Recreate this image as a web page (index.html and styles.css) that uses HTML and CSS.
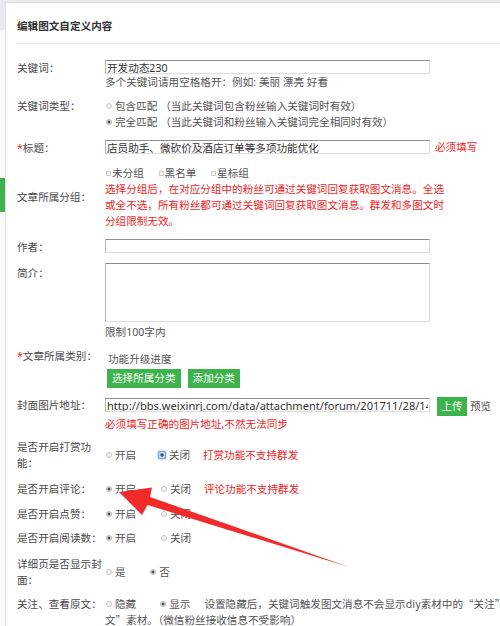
FILE: index.html
```html
<!DOCTYPE html>
<html lang="zh-CN">
<head>
<meta charset="utf-8">
<title>编辑图文自定义内容</title>
<link rel="stylesheet" href="styles.css">
</head>
<body>
<div class="layout">
  <aside class="sidenav">
    <span class="sidenav-item"></span>
    <span class="sidenav-active"></span>
  </aside>
  <main class="panel">
    <h2 class="panel-title">编辑图文自定义内容</h2>
    <form class="form">
      <div class="row mt-16">
        <label class="label">关键词：</label>
        <div class="field">
          <input type="text" class="text-input" value="开发动态230">
          <p class="hint">多个关键词请用空格格开：例如: 美丽 漂亮 好看</p>
        </div>
      </div>

      <div class="row mt-8">
        <span class="label">关键词类型：</span>
        <div class="field">
          <label class="choice-line"><input type="radio" class="radio" name="match">包含匹配&nbsp;（当此关键词包含粉丝输入关键词时有效）</label>
          <label class="choice-line"><input type="radio" class="radio" name="match" checked>完全匹配&nbsp;（当此关键词和粉丝输入关键词完全相同时有效）</label>
        </div>
      </div>

      <div class="row mt-10">
        <label class="label"><em class="req">*</em>标题：</label>
        <div class="field field-inline">
          <input type="text" class="text-input" value="店员助手、微砍价及酒店订单等多项功能优化">
          <span class="warn warn-side">必须填写</span>
        </div>
      </div>

      <div class="row mt-9">
        <span class="label label-middle">文章所属分组：</span>
        <div class="field">
          <div class="choices">
            <label class="choice choice-check"><input type="checkbox" class="checkbox">未分组</label>
            <label class="choice choice-check"><input type="checkbox" class="checkbox">黑名单</label>
            <label class="choice choice-check"><input type="checkbox" class="checkbox">星标组</label>
          </div>
          <p class="warn note-block">选择分组后，在对应分组中的粉丝可通过关键词回复获取图文消息。全选或全不选，所有粉丝都可通过关键词回复获取图文消息。群发和多图文时分组限制无效。</p>
        </div>
      </div>

      <div class="row mt-10">
        <label class="label">作者：</label>
        <div class="field">
          <input type="text" class="text-input" value="">
        </div>
      </div>

      <div class="row mt-8">
        <label class="label label-drop">简介：</label>
        <div class="field">
          <textarea class="text-area"></textarea>
          <p class="hint hint-after">限制100字内</p>
        </div>
      </div>

      <div class="row mt-8">
        <span class="label"><em class="req">*</em>文章所属类别：</span>
        <div class="field field-category">
          <p class="category-name">功能升级进度</p>
          <div class="button-group">
            <button type="button" class="btn">选择所属分类</button>
            <button type="button" class="btn">添加分类</button>
          </div>
        </div>
      </div>

      <div class="row mt-9">
        <label class="label">封面图片地址：</label>
        <div class="field">
          <div class="upload-line">
            <input type="text" class="text-input text-input-url" value="http://bbs.weixinrj.com/data/attachment/forum/201711/28/144512abcdef.jpg">
            <button type="button" class="btn btn-upload">上传</button>
            <span class="preview">预览</span>
          </div>
          <p class="warn">必须填写正确的图片地址,不然无法同步</p>
        </div>
      </div>

      <div class="row mt-7">
        <span class="label">是否开启打赏功能：</span>
        <div class="field field-middle">
          <label class="choice"><input type="radio" class="radio" name="reward">开启</label>
          <label class="choice choice-tail"><input type="radio" class="radio radio-focus" name="reward" checked>关闭</label>
          <span class="warn">打赏功能不支持群发</span>
        </div>
      </div>

      <div class="row mt-10">
        <span class="label">是否开启评论：</span>
        <div class="field">
          <label class="choice"><input type="radio" class="radio" name="comment" checked>开启</label>
          <label class="choice choice-tail"><input type="radio" class="radio" name="comment">关闭</label>
          <span class="warn">评论功能不支持群发</span>
        </div>
      </div>

      <div class="row mt-9">
        <span class="label">是否开启点赞：</span>
        <div class="field">
          <label class="choice"><input type="radio" class="radio" name="like" checked>开启</label>
          <label class="choice"><input type="radio" class="radio" name="like">关闭</label>
        </div>
      </div>

      <div class="row mt-8">
        <span class="label">是否开启阅读数：</span>
        <div class="field">
          <label class="choice"><input type="radio" class="radio" name="reads" checked>开启</label>
          <label class="choice"><input type="radio" class="radio" name="reads">关闭</label>
        </div>
      </div>

      <div class="row mt-10">
        <span class="label">详细页是否显示封面：</span>
        <div class="field field-middle">
          <label class="choice"><input type="radio" class="radio" name="cover">是</label>
          <label class="choice"><input type="radio" class="radio" name="cover" checked>否</label>
        </div>
      </div>

      <div class="row mt-8">
        <span class="label">关注、查看原文：</span>
        <div class="field field-flow"><label class="choice choice-wide"><input type="radio" class="radio" name="follow">隐藏</label><label class="choice choice-note"><input type="radio" class="radio" name="follow" checked>显示</label>设置隐藏后，关键词触发图文消息不会显示diy素材中的“关注”“查看原文”素材。（微信粉丝接收信息不受影响）</div>
      </div>
    </form>
  </main>
</div>

<svg class="pointer-arrow" width="500" height="626" viewBox="0 0 500 626" aria-hidden="true">
  <polygon points="119,492 152,487.5 150,497 349,567 147.5,505 142,515" fill="#f12a2a"/>
</svg>
</body>
</html>
```

FILE: styles.css
```css
* {
  box-sizing: border-box;
}

html,
body {
  margin: 0;
  padding: 0;
  overflow: hidden;
}

body {
  position: relative;
  width: 500px;
  height: 626px;
  background: #e9ebee;
  font-family: "Noto Sans", "Noto Sans CJK SC", sans-serif;
  font-size: 10.6px;
  line-height: 16px;
  color: #444;
}

p {
  margin: 0;
}

/* page frame: thin side menu + content panel */
.layout {
  display: flex;
  width: 600px;
  padding-top: 2px;
}

.sidenav {
  flex: none;
  width: 5px;
  display: flex;
  flex-direction: column;
  background: #fafafa;
}

.sidenav-item {
  height: 28px;
  background: #e7e9ec;
}

.sidenav-active {
  margin-top: 148px;
  height: 34px;
  background: #3cb44b;
}

.panel {
  flex: none;
  width: 590px;
  min-height: 700px;
  padding: 0 11px 40px;
  background: #fff;
  border: 1px solid #e2e2e2;
  border-right: 0;
}

.panel-title {
  margin: 0;
  padding: 15px 0 9px;
  font-size: 10.6px;
  line-height: 16px;
  font-weight: bold;
  color: #333;
  border-bottom: 1px solid #e8e8e8;
}

/* form rows */
.row {
  display: flex;
  align-items: flex-start;
}

.mt-7 { margin-top: 7px; }
.mt-8 { margin-top: 8px; }
.mt-9 { margin-top: 9px; }
.mt-10 { margin-top: 10px; }
.mt-16 { margin-top: 16px; }

.label {
  flex: none;
  width: 88px;
  color: #4a4a4a;
}

.label-middle {
  align-self: center;
}

.label-drop {
  margin-top: 2px;
}

.req {
  font-style: normal;
  color: #f22;
}

.field {
  flex: none;
  width: 433px;
}

.field-inline {
  display: flex;
  align-items: flex-start;
}

.field-middle {
  align-self: center;
}

.field-category {
  padding: 3px 0 0 2px;
}

.field-flow {
  width: 444px;
  font-family: "Noto Sans CJK SC", sans-serif;
  color: #555;
}

/* text inputs */
.text-input,
.text-area {
  display: block;
  width: 325px;
  margin: 0;
  padding: 0 1px;
  font-family: inherit;
  font-size: 10.6px;
  color: #333;
  background: #fff;
  border: 1px solid #dcdcdc;
  border-top-color: #8e8e8e;
  border-left-color: #b4b4b4;
  border-radius: 0;
  outline: none;
}

.text-input {
  height: 14px;
  line-height: 12px;
}

.text-area {
  height: 59px;
  resize: none;
}

.hint {
  color: #555;
}

.hint-after {
  margin-top: 2px;
}

.warn {
  color: #f31d1d;
}

.warn-side {
  margin-left: 5px;
  margin-top: -1px;
}

.note-block {
  width: 341px;
}

/* radios and checkboxes */
.choice-line {
  display: flex;
  align-items: center;
  color: #555;
}

.choice {
  display: inline-flex;
  align-items: center;
  margin-right: 21px;
  color: #555;
  vertical-align: top;
}

.choice-tail {
  margin-right: 10px;
}

.choice-wide {
  margin-right: 23px;
}

.choice-note {
  margin-right: 14px;
}

.choice-check {
  margin-right: 11px;
}

.radio {
  appearance: none;
  -webkit-appearance: none;
  flex: none;
  width: 6px;
  height: 6px;
  margin: 0 3px 0 1px;
  border: 1px solid #c6c6c6;
  border-radius: 50%;
  background: #f4f4f4;
}

.radio:checked {
  background: radial-gradient(circle, #555 0 1.2px, #e9e9e9 1.8px);
  border-color: #b9b9b9;
}

.radio-focus,
.radio-focus:checked {
  width: 8px;
  height: 8px;
  margin-left: -2px;
  border-radius: 1px;
  border-color: #84a8dc;
  background: radial-gradient(circle, #555 0 1.3px, #bcd2f1 2px);
  box-shadow: 0 0 0 1px #d2e1f6;
}

.checkbox {
  appearance: none;
  -webkit-appearance: none;
  flex: none;
  width: 5px;
  height: 5px;
  margin: 0 1px 0 1px;
  border: 1px solid #cfcfcf;
  background: #f2f2f2;
}

/* category picker */
.category-name {
  margin-left: 1px;
  color: #555;
}

.button-group {
  display: flex;
  gap: 7px;
  margin-top: 2px;
}

.btn {
  height: 19px;
  margin: 0;
  padding: 0 5px;
  font-family: inherit;
  font-size: 10.6px;
  line-height: 19px;
  color: #fff;
  background: #3cb34c;
  border: 0;
  border-radius: 0;
}

/* cover upload */
.upload-line {
  display: flex;
  align-items: flex-start;
  height: 19px;
}

.text-input-url {
  margin-top: 1px;
  font-size: 11.1px;
}

.btn-upload {
  margin-left: 7px;
  padding: 0 4px;
  width: 30px;
}

.preview {
  margin-left: 3px;
  margin-top: 1px;
  color: #555;
}

/* red pointer drawn over the form */
.pointer-arrow {
  position: absolute;
  top: 0;
  left: 0;
  pointer-events: none;
}
```
